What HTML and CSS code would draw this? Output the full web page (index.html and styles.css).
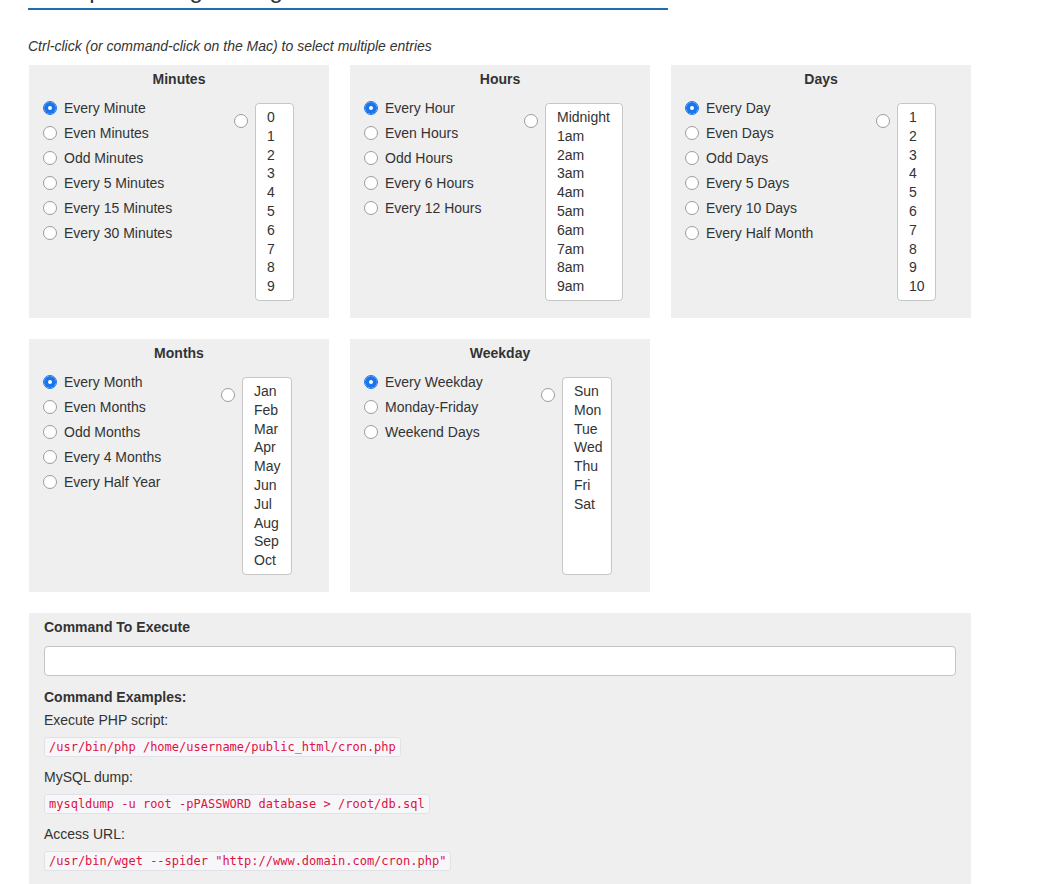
FILE: index.html
```html
<!DOCTYPE html>
<html lang="en">
<head>
<meta charset="utf-8">
<title>Crontab Generator</title>
<link rel="stylesheet" href="styles.css">
</head>
<body>
<div class="page">
  <div class="head"><h1 class="head-title">Example Settings Using Crontab</h1></div>
  <p class="hint">Ctrl-click (or command-click on the Mac) to select multiple entries</p>

  <div class="grid">
    <section class="panel">
      <h3 class="panel-title">Minutes</h3>
      <div class="panel-body">
        <div class="presets presets--minutes">
          <label class="row"><input type="radio" name="min" class="radio" checked>Every Minute</label>
          <label class="row"><input type="radio" name="min" class="radio">Even Minutes</label>
          <label class="row"><input type="radio" name="min" class="radio">Odd Minutes</label>
          <label class="row"><input type="radio" name="min" class="radio">Every 5 Minutes</label>
          <label class="row"><input type="radio" name="min" class="radio">Every 15 Minutes</label>
          <label class="row"><input type="radio" name="min" class="radio">Every 30 Minutes</label>
        </div>
        <div class="custom">
          <input type="radio" name="min" class="radio custom-radio">
          <div class="listbox listbox--minutes">
            <div class="opt">0</div><div class="opt">1</div><div class="opt">2</div><div class="opt">3</div><div class="opt">4</div>
            <div class="opt">5</div><div class="opt">6</div><div class="opt">7</div><div class="opt">8</div><div class="opt">9</div>
          </div>
        </div>
      </div>
    </section>

    <section class="panel">
      <h3 class="panel-title">Hours</h3>
      <div class="panel-body">
        <div class="presets presets--hours">
          <label class="row"><input type="radio" name="hr" class="radio" checked>Every Hour</label>
          <label class="row"><input type="radio" name="hr" class="radio">Even Hours</label>
          <label class="row"><input type="radio" name="hr" class="radio">Odd Hours</label>
          <label class="row"><input type="radio" name="hr" class="radio">Every 6 Hours</label>
          <label class="row"><input type="radio" name="hr" class="radio">Every 12 Hours</label>
        </div>
        <div class="custom">
          <input type="radio" name="hr" class="radio custom-radio">
          <div class="listbox listbox--hours">
            <div class="opt">Midnight</div><div class="opt">1am</div><div class="opt">2am</div><div class="opt">3am</div><div class="opt">4am</div>
            <div class="opt">5am</div><div class="opt">6am</div><div class="opt">7am</div><div class="opt">8am</div><div class="opt">9am</div>
          </div>
        </div>
      </div>
    </section>

    <section class="panel">
      <h3 class="panel-title">Days</h3>
      <div class="panel-body">
        <div class="presets presets--days">
          <label class="row"><input type="radio" name="day" class="radio" checked>Every Day</label>
          <label class="row"><input type="radio" name="day" class="radio">Even Days</label>
          <label class="row"><input type="radio" name="day" class="radio">Odd Days</label>
          <label class="row"><input type="radio" name="day" class="radio">Every 5 Days</label>
          <label class="row"><input type="radio" name="day" class="radio">Every 10 Days</label>
          <label class="row"><input type="radio" name="day" class="radio">Every Half Month</label>
        </div>
        <div class="custom">
          <input type="radio" name="day" class="radio custom-radio">
          <div class="listbox listbox--days">
            <div class="opt">1</div><div class="opt">2</div><div class="opt">3</div><div class="opt">4</div><div class="opt">5</div>
            <div class="opt">6</div><div class="opt">7</div><div class="opt">8</div><div class="opt">9</div><div class="opt">10</div>
          </div>
        </div>
      </div>
    </section>

    <section class="panel">
      <h3 class="panel-title">Months</h3>
      <div class="panel-body">
        <div class="presets presets--months">
          <label class="row"><input type="radio" name="mon" class="radio" checked>Every Month</label>
          <label class="row"><input type="radio" name="mon" class="radio">Even Months</label>
          <label class="row"><input type="radio" name="mon" class="radio">Odd Months</label>
          <label class="row"><input type="radio" name="mon" class="radio">Every 4 Months</label>
          <label class="row"><input type="radio" name="mon" class="radio">Every Half Year</label>
        </div>
        <div class="custom">
          <input type="radio" name="mon" class="radio custom-radio">
          <div class="listbox listbox--months">
            <div class="opt">Jan</div><div class="opt">Feb</div><div class="opt">Mar</div><div class="opt">Apr</div>
            <div class="opt">May</div><div class="opt">Jun</div><div class="opt">Jul</div><div class="opt">Aug</div>
            <div class="opt">Sep</div><div class="opt">Oct</div>
          </div>
        </div>
      </div>
    </section>

    <section class="panel">
      <h3 class="panel-title">Weekday</h3>
      <div class="panel-body">
        <div class="presets presets--weekday">
          <label class="row"><input type="radio" name="wd" class="radio" checked>Every Weekday</label>
          <label class="row"><input type="radio" name="wd" class="radio">Monday-Friday</label>
          <label class="row"><input type="radio" name="wd" class="radio">Weekend Days</label>
        </div>
        <div class="custom">
          <input type="radio" name="wd" class="radio custom-radio">
          <div class="listbox listbox--weekday">
            <div class="opt">Sun</div><div class="opt">Mon</div><div class="opt">Tue</div><div class="opt">Wed</div>
            <div class="opt">Thu</div><div class="opt">Fri</div><div class="opt">Sat</div>
          </div>
        </div>
      </div>
    </section>

    <section class="panel panel--command">
      <div class="cmd-label">Command To Execute</div>
      <input type="text" class="cmd-input">
      <div class="cmd-examples">Command Examples:</div>
      <div class="example-label example-label--first">Execute PHP script:</div>
      <div class="example-code"><code class="code">/usr/bin/php /home/username/public_html/cron.php</code></div>
      <div class="example-label">MySQL dump:</div>
      <div class="example-code"><code class="code">mysqldump -u root -pPASSWORD database &gt; /root/db.sql</code></div>
      <div class="example-label">Access URL:</div>
      <div class="example-code"><code class="code">/usr/bin/wget --spider "http://www.domain.com/cron.php"</code></div>
    </section>
  </div>
</div>
</body>
</html>
```
FILE: styles.css
```css
* { box-sizing: border-box; }

body {
  margin: 0;
  font-family: "Liberation Sans", Arial, Helvetica, sans-serif;
  font-size: 14px;
  line-height: 20px;
  color: #333;
  background: #fff;
}

.page {
  padding: 0 0 0 28px;
}

.head {
  width: 640px;
  height: 10px;
  overflow: hidden;
  border-bottom: 2px solid #1d6db3;
}

.head-title {
  margin: -24px 0 0 0;
  font-size: 24px;
  line-height: 28px;
  font-weight: normal;
  color: #333;
  white-space: nowrap;
}

.hint {
  margin: 26px 0 9px 0;
  font-style: italic;
  line-height: 20px;
}

.grid {
  margin-left: 1px;
  display: grid;
  grid-template-columns: repeat(3, 300px);
  gap: 21px;
}

.panel {
  background: #efefef;
  padding: 4px 0 17px 0;
}

.panel-title {
  margin: 0;
  font-size: 14px;
  line-height: 20px;
  font-weight: bold;
  text-align: center;
  color: #333;
}

.panel-body {
  display: flex;
  align-items: flex-start;
  margin-top: 6px;
  padding-left: 14px;
}

.presets { display: flex; flex-direction: column; }
.presets--minutes { width: 191px; }
.presets--hours { width: 160px; }
.presets--days { width: 191px; }
.presets--months { width: 178px; }
.presets--weekday { width: 177px; }

.row {
  display: flex;
  align-items: center;
  height: 25px;
  white-space: nowrap;
}

.radio {
  appearance: none;
  -webkit-appearance: none;
  flex: none;
  width: 14px;
  height: 14px;
  margin: 0 7px 0 0;
  border: 1px solid #9c9c9c;
  border-radius: 50%;
  background: #fff;
}

.radio:checked {
  border-color: #1a74ec;
  box-shadow: inset 0 0 0 4px #1a74ec;
}

.custom {
  display: flex;
  align-items: flex-start;
  margin-top: 8px;
}

.custom-radio {
  margin-top: 11px;
}

.listbox {
  height: 198px;
  overflow: hidden;
  padding: 4px 0 0 11px;
  background: #fff;
  border: 1px solid #c6c6c6;
  border-radius: 4px;
}

.listbox--minutes { width: 39px; }
.listbox--hours { width: 78px; }
.listbox--days { width: 39px; }
.listbox--months { width: 50px; }
.listbox--weekday { width: 50px; }

.opt {
  line-height: 18.8px;
  white-space: nowrap;
}

.panel--command {
  grid-column: 1 / -1;
  padding: 4px 15px 15px 15px;
}

.cmd-label {
  font-weight: bold;
  line-height: 20px;
}

.cmd-input {
  display: block;
  width: 100%;
  height: 30px;
  margin-top: 9px;
  border: 1px solid #c4c4c4;
  border-radius: 4px;
  background: #fff;
  font: inherit;
}

.cmd-examples {
  margin-top: 11px;
  font-weight: bold;
  line-height: 20px;
}

.example-label {
  margin-top: 10px;
  line-height: 20px;
}

.example-label--first {
  margin-top: 3px;
}

.example-code {
  margin-top: 7px;
  height: 20px;
}

.code {
  display: inline-block;
  vertical-align: top;
  padding: 2px 4px;
  font-family: "DejaVu Sans Mono", Menlo, Monaco, monospace;
  font-size: 12px;
  line-height: 14px;
  color: #dd1144;
  background: #f7f7f9;
  border: 1px solid #e1e1e8;
  border-radius: 3px;
  white-space: nowrap;
}
```
